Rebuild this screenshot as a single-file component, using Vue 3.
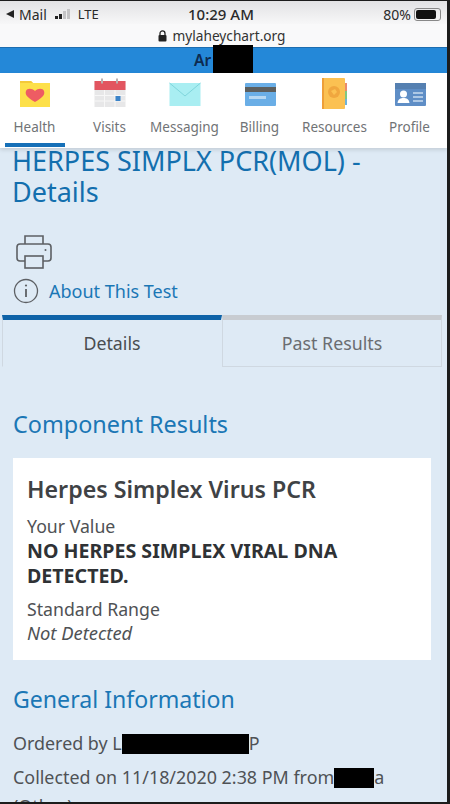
<template>
  <div class="phone">
    <header class="status-bar">
      <div class="status-left">
        <span class="back-arrow"></span>
        <span class="carrier">Mail</span>
        <span class="signal"><i></i><i></i><i class="off"></i><i class="off"></i></span>
        <span class="lte">LTE</span>
      </div>
      <div class="status-time">10:29 AM</div>
      <div class="status-right">
        <span>80%</span>
        <span class="battery"><span class="battery-fill"></span></span>
      </div>
    </header>
    <div class="url-bar">
      <svg class="lock" width="9" height="12" viewBox="0 0 9 12">
        <path d="M2 5V3.4a2.5 2.5 0 0 1 5 0V5" fill="none" stroke="#222" stroke-width="1.3" />
        <rect x="0.5" y="5" width="8" height="6.5" rx="1" fill="#222" />
      </svg>
      <span>mylaheychart.org</span>
    </div>
    <div class="name-bar">
      <span class="name">Ar</span>
      <span class="name-redact"></span>
    </div>

    <nav class="tabs-nav">
      <a v-for="item in navItems" :key="item.label" class="nav-item" :class="{ active: item.active }">
        <svg width="34" height="34" viewBox="0 0 34 34" class="nav-icon">
          <template v-if="item.icon === 'health'">
            <path d="M2 4h11l2 2h17v24H2z" fill="#fde04a" />
            <path d="M2 4h11l2 2H2z" fill="#f4c93a" />
            <path d="M17 25c-9-5-10-8-9-11 1-3 6-3 9 0 3-3 8-3 9 0 1 3 0 6-9 11z" fill="#ee5c63" />
          </template>
          <template v-else-if="item.icon === 'visits'">
            <rect x="1.500" y="4" width="31" height="26" fill="#e7e7e8" />
            <rect x="1.500" y="4" width="31" height="9" fill="#e25560" />
            <path d="M9 1.500v5M24 1.500v5" stroke="#b9b0b0" stroke-width="2" />
            <path d="M11.500 13v17M22 13v17M1.500 18.500h31M1.500 24h31" stroke="#f7f7f7" stroke-width="1" />
            <rect x="22.500" y="19" width="5" height="5" fill="#3b83c8" />
          </template>
          <template v-else-if="item.icon === 'messaging'">
            <rect x="1.500" y="6" width="31" height="23" fill="#a9eef2" />
            <path d="M1.500 6 17 19 32.500 6" fill="none" stroke="#7fd6dc" stroke-width="1" />
          </template>
          <template v-else-if="item.icon === 'billing'">
            <rect x="2" y="6" width="31" height="23" rx="1" fill="#6aaee6" />
            <rect x="2" y="10" width="31" height="5" fill="#5d5f5e" />
            <rect x="6" y="19" width="17" height="3" fill="#b7d8f2" />
          </template>
          <template v-else-if="item.icon === 'resources'">
            <rect x="26" y="6" width="3" height="8" fill="#e98a6c" />
            <rect x="26" y="14" width="3" height="8" fill="#80c783" />
            <rect x="26" y="22" width="3" height="6" fill="#6fb2d8" />
            <rect x="4" y="1" width="23" height="31" rx="1" fill="#fbc152" />
            <rect x="4" y="1" width="2" height="31" fill="#ee9f39" />
            <circle cx="16" cy="15" r="6" fill="#f0a73f" />
            <path d="M13 14l4-2 2 3-3 3z" fill="#fbc152" />
          </template>
          <template v-else>
            <rect x="2" y="6" width="31" height="23" rx="1" fill="#5f8ec6" />
            <rect x="2" y="6" width="31" height="6" fill="#5580b1" />
            <circle cx="10.500" cy="17" r="3.500" fill="#fff" />
            <path d="M4.500 26c.5-4 3-5 6-5s5.500 1 6 5z" fill="#fff" />
            <path d="M20 16h10M20 20h10M20 24h10" stroke="#c9dcf0" stroke-width="1.500" />
          </template>
        </svg>
        <span>{{ item.label }}</span>
      </a>
    </nav>

    <main class="content">
      <h1>HERPES SIMPLX PCR(MOL) - Details</h1>
      <svg class="printer" width="38" height="36" viewBox="0 0 38 36" fill="none" stroke="#5d6064" stroke-width="1.600">
        <path d="M10 10V2h18v8" />
        <path d="M10 27H5a3 3 0 0 1-3-3V13a3 3 0 0 1 3-3h28a3 3 0 0 1 3 3v11a3 3 0 0 1-3 3h-5" />
        <rect x="10" y="22" width="18" height="12" />
        <circle cx="30.500" cy="16" r="1" fill="#5d6064" stroke="none" />
      </svg>
      <div class="about">
        <svg width="26" height="26" viewBox="0 0 26 26" fill="none" stroke="#5d6064" stroke-width="1.300">
          <circle cx="13" cy="13" r="11.500" />
          <path d="M13 11v8" stroke-width="1.800" />
          <circle cx="13" cy="7.500" r="1.100" fill="#5d6064" stroke="none" />
        </svg>
        <span>About This Test</span>
      </div>

      <div class="result-tabs">
        <div class="tab selected">Details</div>
        <div class="tab">Past Results</div>
      </div>

      <h2 class="component-title">Component Results</h2>
      <section class="card">
        <h3>Herpes Simplex Virus PCR</h3>
        <div class="label">Your Value</div>
        <div class="value">NO HERPES SIMPLEX VIRAL DNA DETECTED.</div>
        <div class="label range">Standard Range</div>
        <div class="range-value">Not Detected</div>
      </section>

      <h2 class="general-title">General Information</h2>
      <p class="ordered">Ordered by L<span class="redact ordered-redact"></span>P</p>
      <p class="collected">Collected on 11/18/2020 2:38 PM from<span class="redact collected-redact"></span>a (Other)</p>
    </main>
  </div>
</template>

<script setup>
const navItems = [
  { label: 'Health', icon: 'health', active: true },
  { label: 'Visits', icon: 'visits' },
  { label: 'Messaging', icon: 'messaging' },
  { label: 'Billing', icon: 'billing' },
  { label: 'Resources', icon: 'resources' },
  { label: 'Profile', icon: 'profile' }
]
</script>

<style>
html, body {
  margin: 0;
  background: #1c1c1c;
}
</style>

<style scoped>
.phone {
  width: 447px;
  height: 801px;
  margin-top: 1px;
  display: flex;
  flex-direction: column;
  overflow: hidden;
  background: #deeaf5;
  font-family: "Noto Sans", "Open Sans", sans-serif;
  color: #4f5255;
}

.status-bar {
  height: 23px;
  flex: none;
  display: flex;
  align-items: center;
  justify-content: space-between;
  padding: 3px 6px 0 6px;
  background: linear-gradient(#e2e2e4, #f7f7f8);
  color: #2a2a2a;
  font-size: 14px;
  box-sizing: border-box;
  position: relative;
}

.status-left, .status-right {
  display: flex;
  align-items: center;
  gap: 3px;
}

.carrier { margin-left: 2px; }

.status-time {
  position: absolute;
  left: 188px;
  top: 3px;
  font-size: 15px;
  font-weight: 500;
}

.back-arrow {
  width: 0;
  height: 0;
  border-top: 4px solid transparent;
  border-bottom: 4px solid transparent;
  border-right: 8px solid #222;
}

.signal {
  display: flex;
  align-items: flex-end;
  gap: 1px;
  height: 10px;
  margin: 0 5px 0 5px;
}

.signal i {
  width: 3px;
  background: #222;
  height: 3px;
}

.signal i:nth-child(2) { height: 5px; }
.signal i:nth-child(3) { height: 8px; }
.signal i:nth-child(4) { height: 10px; }
.signal .off { background: #c4c4c6; }

.lte { font-size: 13px; }

.battery {
  width: 27px;
  height: 13px;
  border: 1px solid #888;
  border-radius: 3px;
  padding: 1px;
  box-sizing: border-box;
  display: block;
}

.battery-fill {
  display: block;
  width: 85%;
  height: 100%;
  background: #111;
  border-radius: 2px;
}

.url-bar {
  height: 24px;
  flex: none;
  display: flex;
  align-items: center;
  justify-content: center;
  gap: 5px;
  background: #f9f9fa;
  color: #333;
  font-size: 13.700px;
  padding-right: 3px;
  border-bottom: 1px solid #1d6db0;
  box-sizing: border-box;
}

.name-bar {
  height: 25px;
  flex: none;
  background: #2488d8;
  position: relative;
  text-align: center;
  line-height: 25px;
}

.name {
  position: absolute;
  left: 194px;
  color: #0d2b50;
  font-size: 15.500px;
  font-weight: 600;
}

.name-redact {
  position: absolute;
  left: 213px;
  top: -3px;
  width: 40px;
  height: 29px;
  background: #000;
}

.tabs-nav {
  height: 75px;
  flex: none;
  display: flex;
  background: #fff;
  box-shadow: 0 2px 4px rgba(0, 0, 0, 0.12);
  position: relative;
  z-index: 1;
  box-sizing: border-box;
}

.nav-item {
  width: 75px;
  flex: none;
  display: flex;
  flex-direction: column;
  align-items: center;
  padding-top: 4px;
  font-size: 13.500px;
  color: #707376;
  position: relative;
  box-sizing: border-box;
}

.nav-item:first-child { margin-left: -3px; }

.nav-icon { margin-bottom: 7px; }

.nav-item.active::after {
  content: "";
  position: absolute;
  left: 8px;
  width: 60px;
  bottom: 1px;
  height: 4px;
  background: #1670b8;
}

.content {
  flex: 1;
  padding: 0 16px 0 13px;
  min-height: 0;
}

h1 {
  margin: -3px 0 0 -1px;
  font-size: 27px;
  line-height: 31px;
  font-weight: 400;
  color: #136fae;
}

.printer {
  display: block;
  margin: 27px 0 0 2px;
}

.about {
  display: flex;
  align-items: center;
  gap: 10px;
  margin-top: 8px;
  color: #1b77b5;
  font-size: 18px;
}

.result-tabs {
  display: flex;
  margin: 11px -11px 0 -11px;
  height: 52px;
}

.tab {
  flex: 1;
  text-align: center;
  font-size: 17.800px;
  line-height: 46px;
  color: #6a6d71;
  border-top: 5px solid #c8ccd1;
  border-right: 1px solid #cfd8e1;
  border-bottom: 1px solid #cfd8e1;
  border-left: 1px solid #cfd8e1;
  box-sizing: border-box;
}

.tab.selected {
  color: #4a4d50;
  border-top-color: #0e63a8;
  border-bottom-color: transparent;
  border-right-color: transparent;
}

.component-title, .general-title {
  margin: 0;
  font-weight: 400;
  color: #1b77b5;
  line-height: 30px;
}

.component-title {
  margin-top: 42px;
  font-size: 23.400px;
}

.card {
  margin-top: 19px;
  background: #fff;
  padding: 16px 14px 14px 14px;
  height: 202px;
  box-sizing: border-box;
}

h3 {
  margin: 0;
  font-size: 23.200px;
  line-height: 30px;
  font-weight: 600;
  color: #3f4245;
}

.label {
  margin-top: 11px;
  font-size: 17.700px;
  line-height: 23px;
}

.value {
  font-size: 19.600px;
  line-height: 25px;
  font-weight: 700;
  color: #2f3235;
}

.range { margin-top: 10px; }

.range-value {
  font-size: 18.400px;
  line-height: 23px;
  font-style: italic;
}

.general-title {
  margin-top: 24px;
  font-size: 23.100px;
}

p {
  margin: 0;
  font-size: 17.900px;
  line-height: 31px;
}

.ordered { margin-top: 14px; }

.collected {
  margin-top: 4px;
  line-height: 29px;
}

.redact {
  display: inline-block;
  background: #000;
  height: 20px;
  vertical-align: -4px;
}

.ordered-redact { width: 127px; }
.collected-redact { width: 40px; }
</style>
